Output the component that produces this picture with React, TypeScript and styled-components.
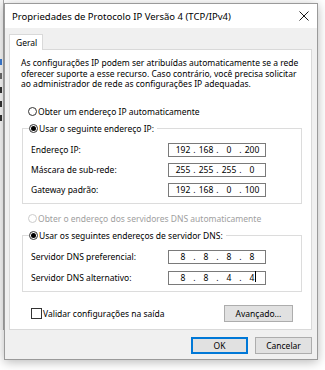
import React from 'react';
import styled, { createGlobalStyle } from 'styled-components';

const GlobalStyle = createGlobalStyle`
  html, body {
    margin: 0;
    padding: 0;
    background: #ffffff;
  }
  body {
    font-family: 'Noto Sans', 'Liberation Sans', sans-serif;
    font-size: 8.5px;
    color: #000;
  }
`;

type IpProps = {
  parts: Array<string>;
  caret?: boolean;
};

const IpBox = (props: IpProps) => {
  return (
    <IpField>
      {props.parts.map((p, i) => (
        <React.Fragment key={i}>
          {i > 0 && <IpDot>.</IpDot>}
          <IpPart>
            {p}
            {props.caret && i === props.parts.length - 1 && <Caret />}
          </IpPart>
        </React.Fragment>
      ))}
    </IpField>
  );
};

const CloseIcon = () => (
  <svg width="10" height="10" viewBox="0 0 10 10">
    <path d="M0.5 0.5 L9.5 9.5 M9.5 0.5 L0.5 9.5" stroke="#1a1a1a" strokeWidth="1" fill="none" />
  </svg>
);

export default function App() {
  return (
    <>
      <GlobalStyle />
      <Desktop>
        <BackWindow>
          <BackText>conectores usando:</BackText>
          <BackIcons>
            <BackMark $color="#3a7bd5" />
            <BackMark $color="#6b6b6b" />
            <BackMark $color="#333" />
            <BackMark $color="#333" />
            <BackMark $color="#333" />
          </BackIcons>
        </BackWindow>
        <Dialog>
          <TitleBar>
            <Title>Propriedades de Protocolo IP Versão 4 (TCP/IPv4)</Title>
            <CloseIcon />
          </TitleBar>
          <Body>
            <TabStrip>
              <Tab>Geral</Tab>
            </TabStrip>
            <Panel>
              <Intro>
                As configurações IP podem ser atribuídas automaticamente se a rede
                <br />
                oferecer suporte a esse recurso. Caso contrário, você precisa solicitar
                <br />
                ao administrador de rede as configurações IP adequadas.
              </Intro>

              <OptionRow $top={16}>
                <Radio />
                <span>Obter um endereço IP automaticamente</span>
              </OptionRow>

              <Group $top={5}>
                <Legend>
                  <Radio $checked />
                  <span>Usar o seguinte endereço IP:</span>
                </Legend>
                <Fields $gap={6}>
                  <FieldRow>
                    <FieldLabel>Endereço IP:</FieldLabel>
                    <IpBox parts={['192', '168', '0', '200']} />
                  </FieldRow>
                  <FieldRow>
                    <FieldLabel>Máscara de sub-rede:</FieldLabel>
                    <IpBox parts={['255', '255', '255', '0']} />
                  </FieldRow>
                  <FieldRow>
                    <FieldLabel>Gateway padrão:</FieldLabel>
                    <IpBox parts={['192', '168', '0', '100']} />
                  </FieldRow>
                </Fields>
              </Group>

              <OptionRow $top={9} $disabled>
                <Radio $disabled />
                <span>Obter o endereço dos servidores DNS automaticamente</span>
              </OptionRow>

              <Group $top={5}>
                <Legend>
                  <Radio $checked />
                  <span>Usar os seguintes endereços de servidor DNS:</span>
                </Legend>
                <Fields $gap={7}>
                  <FieldRow>
                    <FieldLabel>Servidor DNS preferencial:</FieldLabel>
                    <IpBox parts={['8', '8', '8', '8']} />
                  </FieldRow>
                  <FieldRow>
                    <FieldLabel>Servidor DNS alternativo:</FieldLabel>
                    <IpBox parts={['8', '8', '4', '4']} caret />
                  </FieldRow>
                </Fields>
              </Group>

              <BottomRow>
                <CheckLabel>
                  <CheckBox />
                  <span>Validar configurações na saída</span>
                </CheckLabel>
                <Button $width={69}>Avançado...</Button>
              </BottomRow>
            </Panel>
            <ButtonRow>
              <Button $width={57} $default>
                OK
              </Button>
              <Button $width={57}>Cancelar</Button>
            </ButtonRow>
          </Body>
        </Dialog>
      </Desktop>
    </>
  );
}

const Desktop = styled.div`
  position: relative;
  width: 325px;
  height: 370px;
  overflow: hidden;
  background: #ffffff;
`;

const BackWindow = styled.div`
  position: absolute;
  left: -200px;
  top: -10px;
  width: 203px;
  height: 340px;
  background: #f6f6f6;
  border-right: 1px solid #a8a8a8;
`;

const BackText = styled.div`
  padding-left: 190px;
  font-size: 9px;
  line-height: 14px;
  white-space: nowrap;
`;

const BackIcons = styled.div`
  display: flex;
  flex-direction: column;
  align-items: flex-end;
  gap: 8px;
  margin-top: 55px;
  padding-right: 1px;
`;

const BackMark = styled.span<{ $color: string }>`
  display: block;
  width: 2px;
  height: 6px;
  background: ${(p) => p.$color};
`;

const Dialog = styled.div`
  position: absolute;
  left: 4px;
  top: 3px;
  width: 312px;
  height: 355px;
  display: flex;
  flex-direction: column;
  border: 1px solid #9a9a9a;
  background: #f0f0f0;
  box-shadow: 0 2px 10px rgba(0, 0, 0, 0.28);
`;

const TitleBar = styled.div`
  height: 24px;
  display: flex;
  align-items: center;
  justify-content: space-between;
  padding: 0 8px 0 7px;
  background: #ffffff;
`;

const Title = styled.span`
  font-size: 9.5px;
  color: #000;
`;

const Body = styled.div`
  flex: 1;
  display: flex;
  flex-direction: column;
  padding: 6px 5px 5px 4px;
`;

const TabStrip = styled.div`
  display: flex;
  height: 16px;
  position: relative;
  z-index: 1;
`;

const Tab = styled.div`
  width: 34px;
  height: 16px;
  box-sizing: border-box;
  padding-left: 6px;
  display: flex;
  align-items: center;
  background: #ffffff;
  border: 1px solid #d9d9d9;
  border-bottom: none;
`;

const Panel = styled.div`
  margin-top: -1px;
  height: 281px;
  box-sizing: border-box;
  display: flex;
  flex-direction: column;
  background: #ffffff;
  border: 1px solid #d9d9d9;
  padding: 0 9px 0 12px;
`;

const Intro = styled.p`
  margin: 8px 0 0 -1px;
  line-height: 10.5px;
  white-space: nowrap;
`;

const OptionRow = styled.div<{ $top: number; $disabled?: boolean }>`
  display: flex;
  align-items: center;
  gap: 1px;
  height: 12px;
  margin: ${(p) => p.$top}px 0 0 6px;
  color: ${(p) => (p.$disabled ? '#a0a0a0' : '#000')};
`;

const Radio = styled.span<{ $checked?: boolean; $disabled?: boolean }>`
  width: 9px;
  height: 9px;
  box-sizing: border-box;
  border-radius: 50%;
  border: 1px solid ${(p) => (p.$disabled ? '#cccccc' : '#333333')};
  background: #fff;
  display: flex;
  align-items: center;
  justify-content: center;
  flex-shrink: 0;
  &::after {
    content: '';
    width: 5px;
    height: 5px;
    border-radius: 50%;
    background: ${(p) => (p.$checked ? '#000' : 'transparent')};
  }
`;

const Group = styled.fieldset<{ $top: number }>`
  margin: ${(p) => p.$top}px 0 0 0;
  padding: 0 8px 6px 8px;
  border: 1px solid #dcdcdc;
  min-width: 0;
`;

const Legend = styled.legend`
  display: flex;
  align-items: center;
  gap: 1px;
  height: 12px;
  margin-left: -2px;
  padding: 0 3px 0 0;
`;

const Fields = styled.div<{ $gap: number }>`
  display: flex;
  flex-direction: column;
  gap: ${(p) => p.$gap}px;
  margin-top: 8px;
`;

const FieldRow = styled.div`
  display: flex;
  align-items: center;
  justify-content: space-between;
  padding-right: 27px;
`;

const FieldLabel = styled.span`
  white-space: nowrap;
`;

const IpField = styled.div`
  width: 98px;
  height: 14px;
  box-sizing: border-box;
  border: 1px solid #7a7a7a;
  display: flex;
  align-items: center;
  padding: 0 4px 0 5px;
  background: #fff;
`;

const IpPart = styled.span`
  flex: 1;
  text-align: center;
  position: relative;
`;

const IpDot = styled.span`
  width: 5px;
  text-align: center;
`;

const Caret = styled.span`
  position: absolute;
  top: -1px;
  margin-left: 1px;
  width: 1px;
  height: 11px;
  background: #000;
`;

const BottomRow = styled.div`
  display: flex;
  align-items: center;
  justify-content: space-between;
  margin: 13px 9px 0 9px;
  height: 17px;
`;

const CheckLabel = styled.label`
  display: flex;
  align-items: center;
  gap: 1px;
`;

const CheckBox = styled.span`
  width: 11px;
  height: 11px;
  box-sizing: border-box;
  border: 1px solid #333333;
  background: #fff;
`;

const Button = styled.button<{ $width: number; $default?: boolean }>`
  width: ${(p) => p.$width}px;
  height: 17px;
  padding: 0;
  font-family: 'Noto Sans', 'Liberation Sans', sans-serif;
  font-size: 8.5px;
  color: #000;
  background: #e1e1e1;
  border: 1px solid ${(p) => (p.$default ? '#0078d7' : '#adadad')};
  box-shadow: ${(p) => (p.$default ? 'inset 0 0 0 1px #0078d7' : 'none')};
  border-radius: 0;
`;

const ButtonRow = styled.div`
  display: flex;
  justify-content: flex-end;
  gap: 7px;
  margin-top: 7px;
`;
